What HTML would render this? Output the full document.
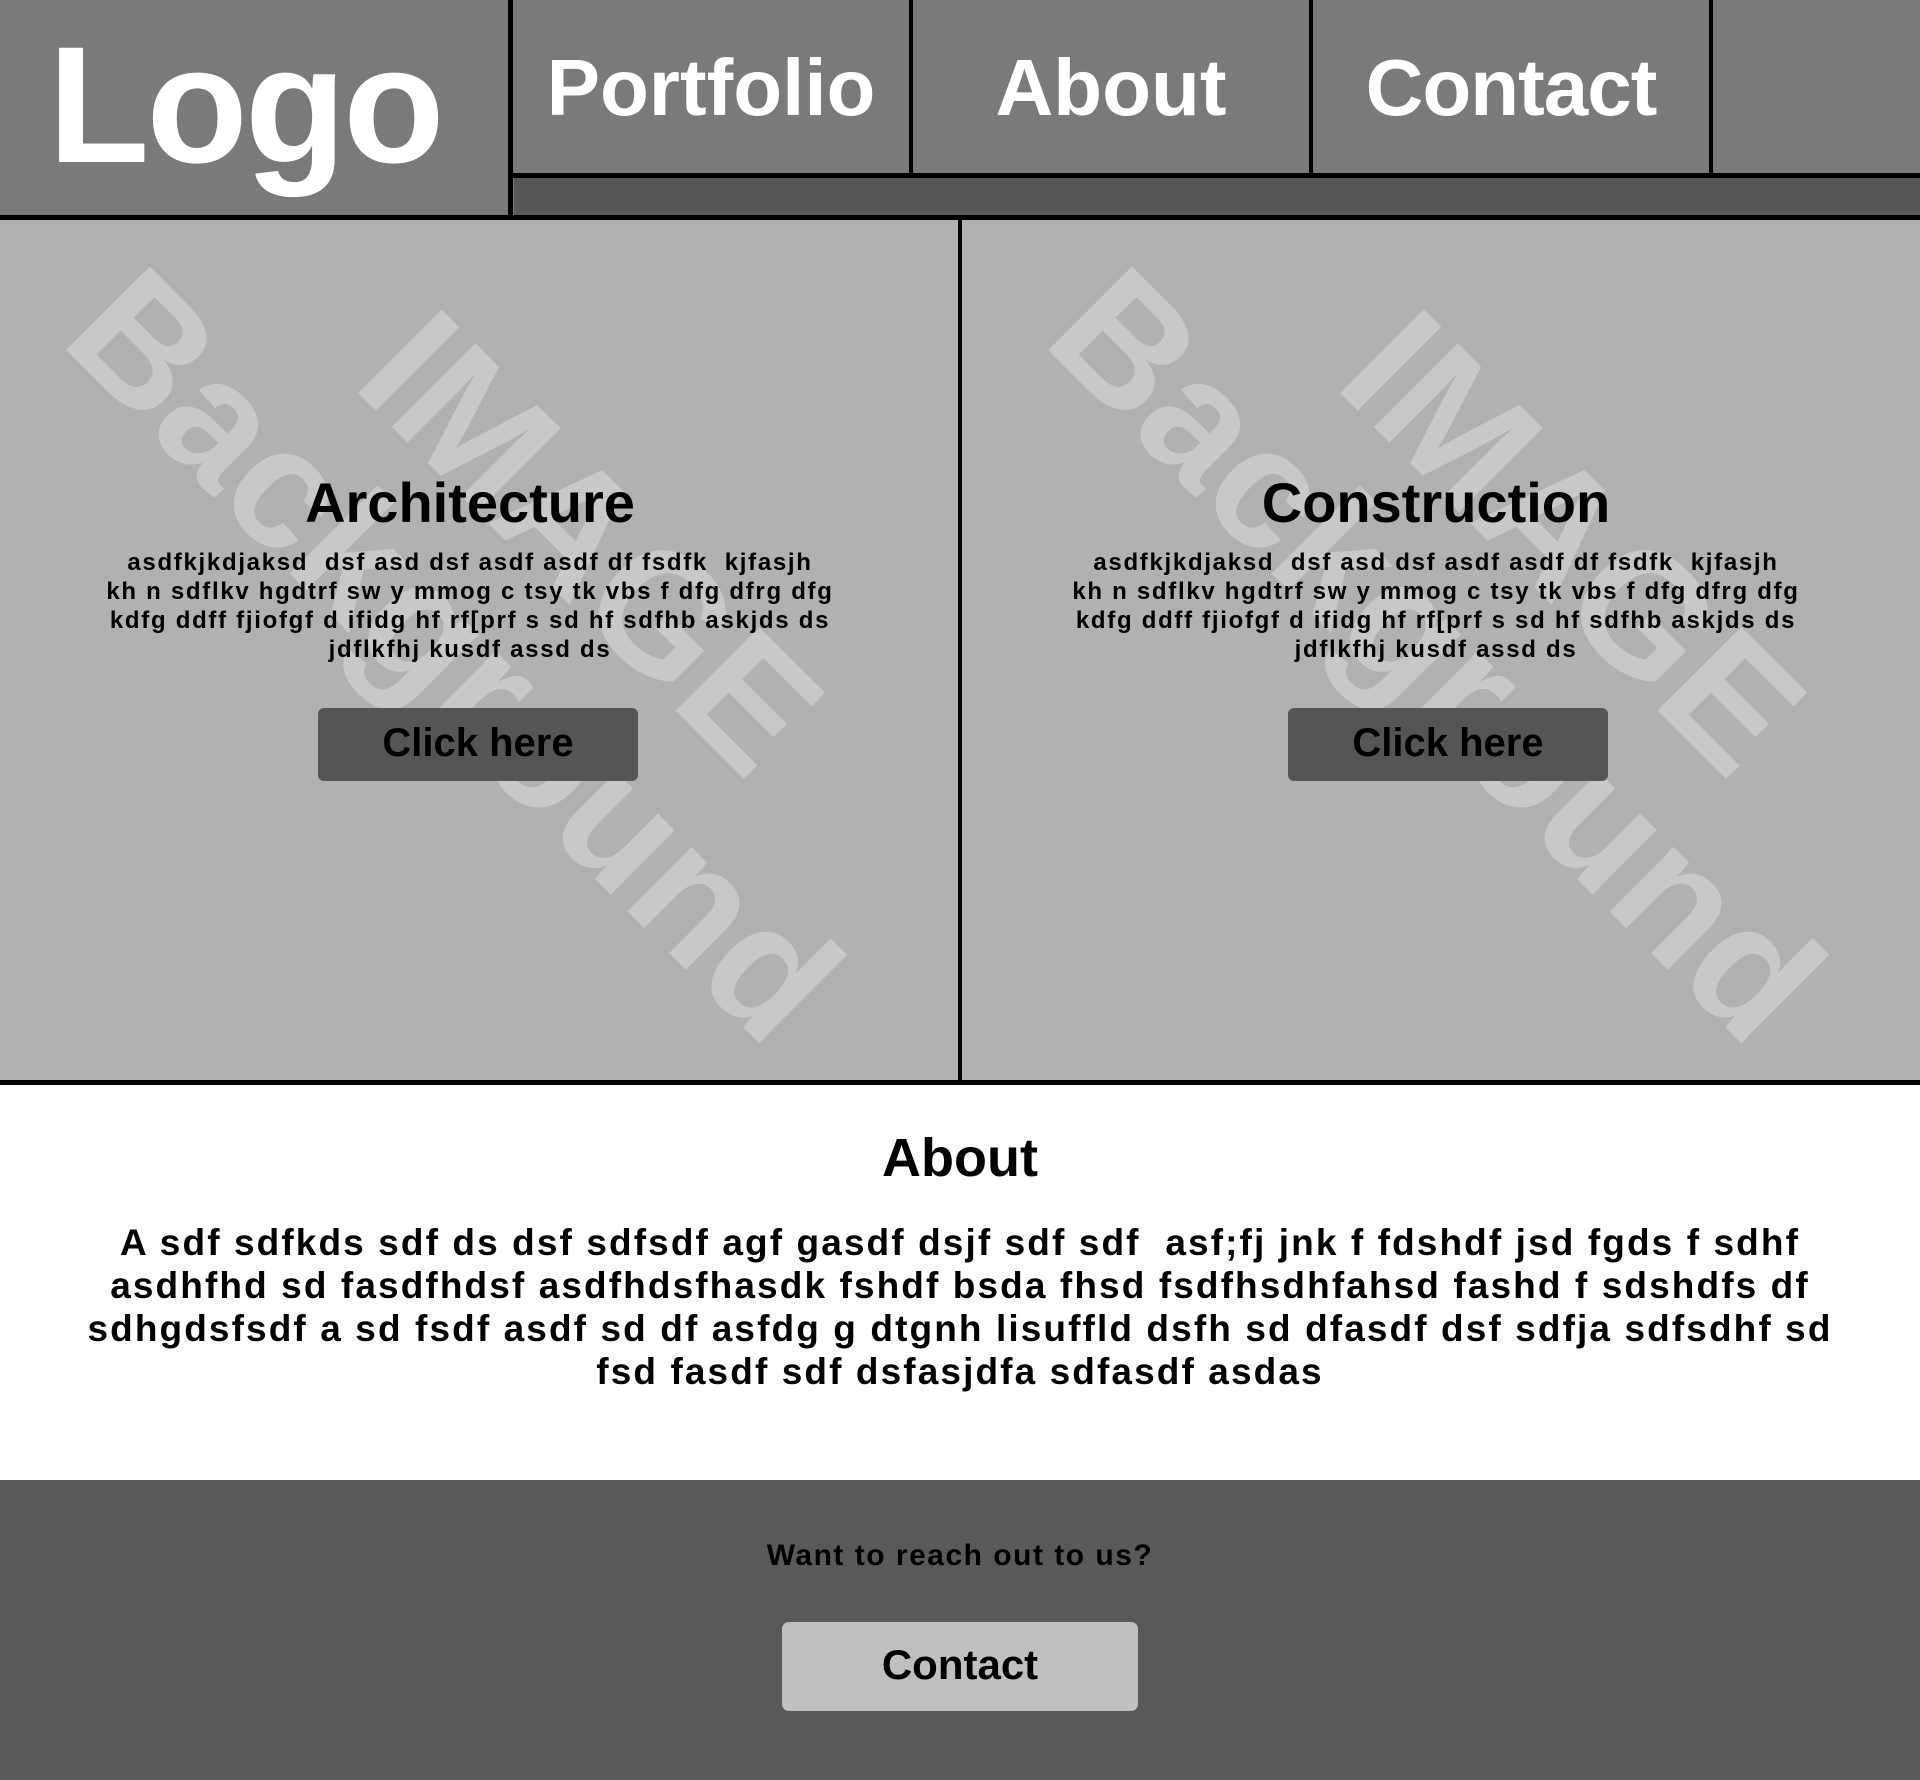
<!DOCTYPE html>
<html><head><meta charset="utf-8"><style>
*{margin:0;padding:0;box-sizing:border-box}
body{width:1920px;height:1780px;position:relative;overflow:hidden;font-family:"Liberation Sans",sans-serif;font-weight:bold;background:#fff}
.a{position:absolute}
.c{text-align:center;white-space:nowrap}
</style></head><body>
<!-- header -->
<div class="a" style="left:0;top:0;width:1920px;height:220px;background:#7a7a7a"></div>
<div class="a" style="left:514px;top:178px;width:1406px;height:37px;background:#575757"></div>
<div class="a" style="left:508px;top:0;width:5px;height:220px;background:#000"></div>
<div class="a" style="left:909px;top:0;width:4px;height:178px;background:#000"></div>
<div class="a" style="left:1309px;top:0;width:4px;height:178px;background:#000"></div>
<div class="a" style="left:1709px;top:0;width:4px;height:178px;background:#000"></div>
<div class="a" style="left:513px;top:173px;width:1407px;height:5px;background:#000"></div>
<div class="a" style="left:0;top:215px;width:1920px;height:5px;background:#000"></div>
<div class="a" style="left:48px;top:11px;font-size:166px;line-height:190px;color:#fff;letter-spacing:-3px">Logo</div>
<div class="a c" style="left:513px;top:38px;width:396px;font-size:80px;line-height:100px;color:#fff">Portfolio</div>
<div class="a c" style="left:913px;top:38px;width:396px;font-size:80px;line-height:100px;color:#fff">About</div>
<div class="a c" style="left:1313px;top:38px;width:396px;font-size:80px;line-height:100px;color:#fff;letter-spacing:-1px">Contact</div>
<!-- panels -->
<div class="a" style="left:0;top:220px;width:1920px;height:860px;background:#b1b1b1;overflow:hidden">
<svg width="1920" height="860" style="position:absolute;left:0;top:0">
<g fill="#c8c8c8" font-family="Liberation Sans,sans-serif" font-weight="bold" font-size="172">
<text transform="translate(58,122) rotate(45)">Background</text>
<text transform="translate(350,165) rotate(45)">IMAGE</text>
<text transform="translate(1040,122) rotate(45)">Background</text>
<text transform="translate(1332,165) rotate(45)">IMAGE</text>
</g></svg>
</div>
<div class="a" style="left:958px;top:220px;width:4px;height:862px;background:#000"></div>
<div class="a" style="left:0;top:1080px;width:1920px;height:5px;background:#000"></div>

<div class="a c" style="left:70px;top:470px;width:800px;font-size:56px;line-height:66px">Architecture</div>
<div class="a c" style="left:70px;top:548px;width:800px;font-size:24px;line-height:29px;letter-spacing:1.7px">asdfkjkdjaksd&nbsp; dsf asd dsf asdf asdf df fsdfk&nbsp; kjfasjh<br>kh n sdflkv hgdtrf sw y mmog c tsy tk vbs f dfg dfrg dfg<br>kdfg ddff fjiofgf d ifidg hf rf[prf s sd hf sdfhb askjds ds<br>jdflkfhj kusdf assd ds</div>
<div class="a c" style="left:318px;top:708px;width:320px;height:73px;background:#555;border-radius:6px;font-size:40px;line-height:70px">Click here</div>

<div class="a c" style="left:1036px;top:470px;width:800px;font-size:56px;line-height:66px">Construction</div>
<div class="a c" style="left:1036px;top:548px;width:800px;font-size:24px;line-height:29px;letter-spacing:1.7px">asdfkjkdjaksd&nbsp; dsf asd dsf asdf asdf df fsdfk&nbsp; kjfasjh<br>kh n sdflkv hgdtrf sw y mmog c tsy tk vbs f dfg dfrg dfg<br>kdfg ddff fjiofgf d ifidg hf rf[prf s sd hf sdfhb askjds ds<br>jdflkfhj kusdf assd ds</div>
<div class="a c" style="left:1288px;top:708px;width:320px;height:73px;background:#555;border-radius:6px;font-size:40px;line-height:70px">Click here</div>
<!-- about -->
<div class="a c" style="left:0;top:1126px;width:1920px;font-size:54px;line-height:64px">About</div>
<div class="a c" style="left:0;top:1221px;width:1920px;font-size:37px;line-height:43px;letter-spacing:2.1px">A sdf sdfkds sdf ds dsf sdfsdf agf gasdf dsjf sdf sdf&nbsp; asf;fj jnk f fdshdf jsd fgds f sdhf<br>asdhfhd sd fasdfhdsf asdfhdsfhasdk fshdf bsda fhsd fsdfhsdhfahsd fashd f sdshdfs df<br>sdhgdsfsdf a sd fsdf asdf sd df asfdg g dtgnh lisuffld dsfh sd dfasdf dsf sdfja sdfsdhf sd<br>fsd fasdf sdf dsfasjdfa sdfasdf asdas</div>
<!-- footer -->
<div class="a" style="left:0;top:1480px;width:1920px;height:300px;background:#595959"></div>
<div class="a c" style="left:0;top:1536px;width:1920px;font-size:30px;line-height:40px;color:#000;letter-spacing:1.5px">Want to reach out to us?</div>
<div class="a c" style="left:782px;top:1622px;width:356px;height:89px;background:#c0c0c0;border-radius:7px;font-size:42px;line-height:86px">Contact</div>
</body></html>
